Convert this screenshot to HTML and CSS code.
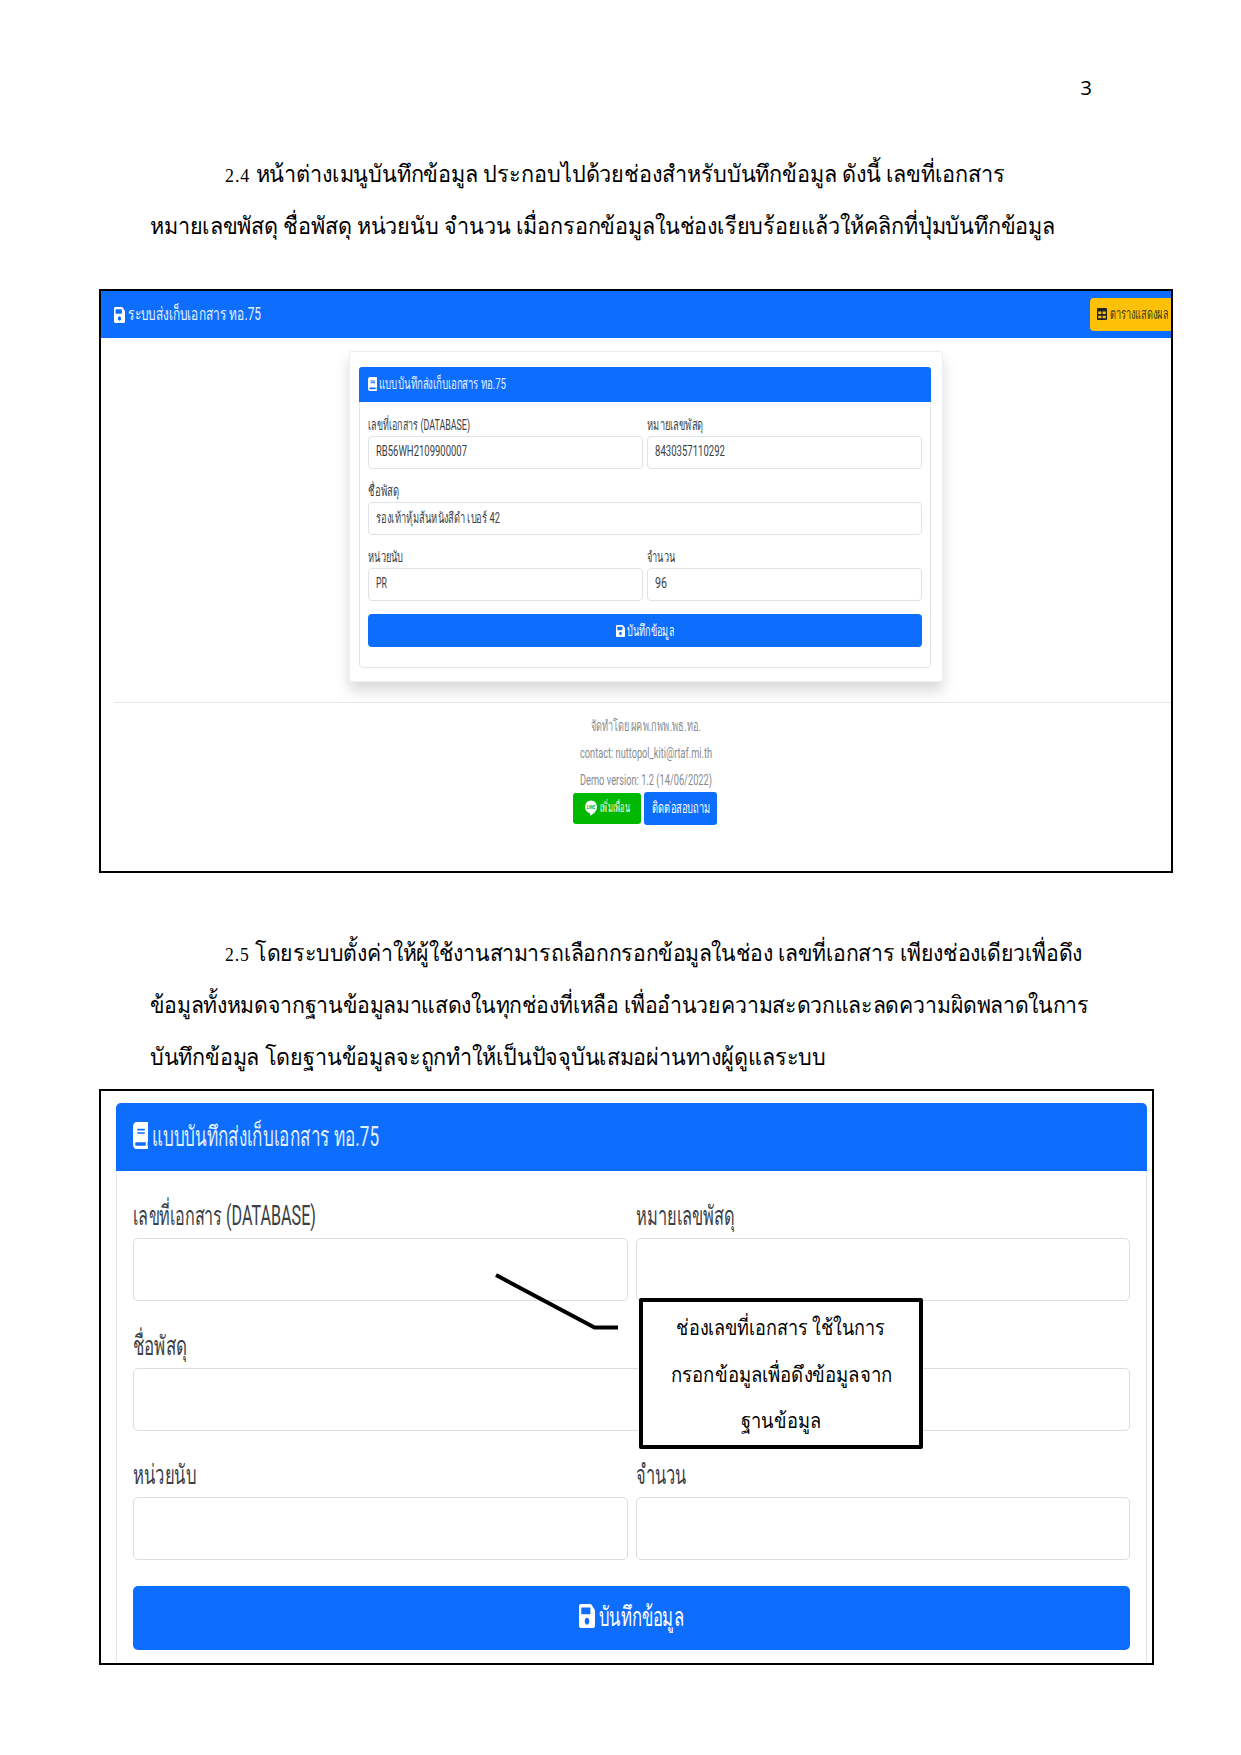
FILE: index.html
```
<!DOCTYPE html>
<html lang="th">
<head>
<meta charset="utf-8">
<title>คู่มือระบบส่งเก็บเอกสาร ทอ.75</title>
<link rel="stylesheet" href="styles.css">
</head>
<body>
<svg class="sprite" aria-hidden="true">
  <symbol id="save" viewBox="0 32 448 448" preserveAspectRatio="none"><path d="M433.941 129.941l-83.882-83.882A48 48 0 0 0 316.118 32H48C21.49 32 0 53.49 0 80v352c0 26.51 21.49 48 48 48h352c26.51 0 48-21.49 48-48V163.882a48 48 0 0 0-14.059-33.941zM224 416c-35.346 0-64-28.654-64-64 0-35.346 28.654-64 64-64s64 28.654 64 64c0 35.346-28.654 64-64 64zm96-304.52V212c0 6.627-5.373 12-12 12H76c-6.627 0-12-5.373-12-12V108c0-6.627 5.373-12 12-12h228.52c3.183 0 6.235 1.264 8.485 3.515l3.48 3.48A11.996 11.996 0 0 1 320 111.48z"/></symbol>
  <symbol id="book" viewBox="0 0 448 512" preserveAspectRatio="none"><path d="M448 360V24c0-13.3-10.7-24-24-24H96C43 0 0 43 0 96v320c0 53 43 96 96 96h328c13.3 0 24-10.7 24-24v-16c0-7.5-3.5-14.3-8.9-18.7-4.2-15.4-4.2-59.3 0-74.7 5.4-4.3 8.9-11.1 8.9-18.6zM128 134c0-3.3 2.7-6 6-6h212c3.3 0 6 2.7 6 6v20c0 3.3-2.7 6-6 6H134c-3.3 0-6-2.7-6-6v-20zm0 64c0-3.3 2.7-6 6-6h212c3.3 0 6 2.7 6 6v20c0 3.3-2.7 6-6 6H134c-3.3 0-6-2.7-6-6v-20zm253.4 250H96c-17.7 0-32-14.3-32-32 0-17.6 14.4-32 32-32h285.4c-1.9 17.1-1.9 46.9 0 64z"/></symbol>
  <symbol id="table" viewBox="0 32 512 448" preserveAspectRatio="none"><path d="M464 32H48C21.49 32 0 53.49 0 80v352c0 26.51 21.49 48 48 48h416c26.51 0 48-21.49 48-48V80c0-26.51-21.49-48-48-48zM224 416H64v-96h160v96zm0-160H64v-96h160v96zm224 160H288v-96h160v96zm0-160H288v-96h160v96z"/></symbol>
</svg>

<div class="page-number">3</div>

<p class="para">
  <span class="line first"><span class="fit" data-width="780"><span class="num">2.4</span> หน้าต่างเมนูบันทึกข้อมูล ประกอบไปด้วยช่องสำหรับบันทึกข้อมูล ดังนี้ เลขที่เอกสาร</span></span>
  <span class="line"><span class="fit" data-width="905">หมายเลขพัสดุ ชื่อพัสดุ หน่วยนับ จำนวน เมื่อกรอกข้อมูลในช่องเรียบร้อยแล้วให้คลิกที่ปุ่มบันทึกข้อมูล</span></span>
</p>

<section class="shot shot-full">
  <header class="topbar">
    <svg class="icon"><use href="#save"/></svg>
    <span class="fit" data-width="133">ระบบส่งเก็บเอกสาร ทอ.75</span>
    <a class="table-btn"><svg class="icon"><use href="#table"/></svg><span class="fit" data-width="58">ตารางแสดงผล</span></a>
  </header>
  <div class="panel">
    <div class="card">
      <div class="card-head"><svg class="icon"><use href="#book"/></svg><span class="fit" data-width="127">แบบบันทึกส่งเก็บเอกสาร ทอ.75</span></div>
      <form class="form">
        <div class="field"><label><span class="fit" data-width="102">เลขที่เอกสาร (DATABASE)</span></label><div class="input"><span class="fit" data-width="91">RB56WH2109900007</span></div></div>
        <div class="field"><label><span class="fit" data-width="56">หมายเลขพัสดุ</span></label><div class="input"><span class="fit" data-width="70">8430357110292</span></div></div>
        <div class="field wide"><label><span class="fit" data-width="31">ชื่อพัสดุ</span></label><div class="input"><span class="fit" data-width="124">รองเท้าหุ้มส้นหนังสีดำ เบอร์ 42</span></div></div>
        <div class="field"><label><span class="fit" data-width="35">หน่วยนับ</span></label><div class="input"><span class="fit" data-width="11">PR</span></div></div>
        <div class="field"><label><span class="fit" data-width="28">จำนวน</span></label><div class="input"><span class="fit" data-width="12">96</span></div></div>
        <div class="save-btn"><svg class="icon"><use href="#save"/></svg><span class="fit" data-width="47">บันทึกข้อมูล</span></div>
      </form>
    </div>
  </div>
  <footer class="foot">
    <div class="foot-line"><span class="fit" data-width="110">จัดทำโดย ผคพ.กพพ.พธ.ทอ.</span></div>
    <div class="foot-line"><span class="fit" data-width="132">contact: nuttopol_kiti@rtaf.mi.th</span></div>
    <div class="foot-line"><span class="fit" data-width="132">Demo version: 1.2 (14/06/2022)</span></div>
    <div class="foot-btns">
      <a class="line-btn">
        <svg class="bubble" viewBox="0 0 24 32" preserveAspectRatio="none"><path d="M12 1C5.400 1 0 6.600 0 14c0 6.500 4.200 11 9 12.200 1.600.6 1.200 2.300 1.300 5.300C17 28 24 22 24 14 24 6.600 18.600 1 12 1z"/><text x="3.500" y="17" textLength="17" lengthAdjust="spacingAndGlyphs">LINE</text></svg>
        <span class="fit" data-width="30">เพิ่มเพื่อน</span>
      </a>
      <a class="ask-btn"><span class="fit" data-width="58">ติดต่อสอบถาม</span></a>
    </div>
  </footer>
</section>

<p class="para para-second">
  <span class="line first"><span class="fit" data-width="857"><span class="num">2.5</span> โดยระบบตั้งค่าให้ผู้ใช้งานสามารถเลือกกรอกข้อมูลในช่อง เลขที่เอกสาร เพียงช่องเดียวเพื่อดึง</span></span>
  <span class="line"><span class="fit" data-width="939">ข้อมูลทั้งหมดจากฐานข้อมูลมาแสดงในทุกช่องที่เหลือ เพื่ออำนวยความสะดวกและลดความผิดพลาดในการ</span></span>
  <span class="line"><span class="fit" data-width="676">บันทึกข้อมูล โดยฐานข้อมูลจะถูกทำให้เป็นปัจจุบันเสมอผ่านทางผู้ดูแลระบบ</span></span>
</p>

<section class="shot shot-zoom">
  <div class="card">
    <div class="card-head"><svg class="icon"><use href="#book"/></svg><span class="fit" data-width="227">แบบบันทึกส่งเก็บเอกสาร ทอ.75</span></div>
    <form class="form">
      <div class="field"><label><span class="fit" data-width="183">เลขที่เอกสาร (DATABASE)</span></label><div class="input"></div></div>
      <div class="field"><label><span class="fit" data-width="99">หมายเลขพัสดุ</span></label><div class="input"></div></div>
      <div class="field wide"><label><span class="fit" data-width="54">ชื่อพัสดุ</span></label><div class="input"></div></div>
      <div class="field"><label><span class="fit" data-width="63">หน่วยนับ</span></label><div class="input"></div></div>
      <div class="field"><label><span class="fit" data-width="50">จำนวน</span></label><div class="input"></div></div>
      <div class="save-btn"><svg class="icon"><use href="#save"/></svg><span class="fit" data-width="85">บันทึกข้อมูล</span></div>
    </form>
  </div>
  <svg class="leader" viewBox="0 0 130 62"><path d="M4 5 102.500 57.500H126"/></svg>
  <div class="callout">
    <span class="fit" data-width="209">ช่องเลขที่เอกสาร ใช้ในการ</span>
    <span class="fit" data-width="222">กรอกข้อมูลเพื่อดึงข้อมูลจาก</span>
    <span class="fit" data-width="80">ฐานข้อมูล</span>
  </div>
</section>
<script src="fit.js"></script>
</body>
</html>
```
FILE: styles.css
```
* { box-sizing: border-box; }
body {
  margin: 0;
  width: 1241px;
  height: 1755px;
  background: #fff;
  color: #000;
  overflow: hidden;
}
.sprite { display: none; }
.fit {
  display: inline-block;
  flex: none;
  white-space: nowrap;
  transform-origin: left center;
}
.icon { flex: none; fill: currentColor; }

/* document text */
.page-number {
  height: 148px;
  padding: 72px 149px 0 0;
  text-align: right;
  font: 500 20.5px/30px "Open Sans", sans-serif;
}
.para {
  margin: 0 0 0 150px;
  font: 23.5px/52px "Liberation Serif", serif;
}
.para-second { margin-top: 54px; }
.line { display: block; height: 52px; }
.line.first { padding-left: 75px; }
.num { font-size: 19.5px; letter-spacing: 1px; }

/* framed captures */
.shot {
  position: relative;
  margin-left: 99px;
  border: 2px solid #000;
  overflow: hidden;
  font-family: Roboto, sans-serif;
  color: #3a4046;
}
.shot-full { width: 1074px; height: 584px; margin-top: 37px; }
.shot-zoom { width: 1055px; height: 576px; margin-top: 6px; padding: 12px 5px 0 15px; }

.topbar {
  display: flex;
  align-items: center;
  height: 47px;
  padding-left: 13px;
  background: #0d6efd;
  color: #e4effe;
  font-size: 18px;
  line-height: 24px;
}
.topbar > .icon { width: 11px; height: 16px; margin-right: 3px; color: #fff; }
.topbar > .fit { margin-top: -2px; }
.table-btn {
  display: flex;
  align-items: center;
  width: 81px;
  height: 33px;
  margin-left: auto;
  margin-top: -1px;
  padding-left: 7px;
  border-radius: 4px 0 0 4px;
  background: #ffc107;
  color: #3d3a1c;
  font-size: 15px;
}
.table-btn .icon { width: 10px; height: 12px; margin-right: 3px; color: #1f2226; }

.panel {
  width: 594px;
  height: 331px;
  margin: 13px 0 0 248px;
  padding: 15px 11px 0 9px;
  border: 1px solid #eceef0;
  border-radius: 3px;
  background: #fff;
  box-shadow: 0 9px 14px rgba(0, 0, 0, .15);
}
.card { border: 1px solid #e3e6e9; border-radius: 4px; background: #fff; }
.panel .card { height: 301px; }
.card-head {
  display: flex;
  align-items: center;
  background: #0d6efd;
  color: #e4effe;
}
.card-head .icon { color: #fff; }
.panel .card-head { height: 35px; margin: -1px -1px 0; padding: 0 0 2px 9px; font-size: 15.5px; line-height: 20px; border-radius: 3px 3px 0 0; }
.panel .card-head .icon { width: 9px; height: 14px; margin-right: 2px; }

.form { display: grid; grid-template-columns: 1fr 1fr; }
.panel .form { padding: 14px 8px 0; column-gap: 4px; }
.wide, .save-btn { grid-column: 1 / -1; }
label { display: block; }
.panel .field { height: 66px; font-size: 14.5px; }
.panel label { height: 20px; line-height: 19px; }
.input { display: flex; align-items: center; border: 1px solid #d9dee3; border-radius: 4px; }
.panel .input { height: 33px; padding: 0 0 2px 7px; border-color: #dfe3e7; }
.save-btn {
  display: flex;
  align-items: center;
  justify-content: center;
  border-radius: 4px;
  background: #0d6efd;
  color: #fff;
}
.panel .save-btn { height: 33px; font-size: 15px; }
.panel .save-btn .icon { width: 9px; height: 12px; margin-right: 2px; }

.foot {
  margin: 20px 0 0 13px;
  padding: 10px 0 0;
  border-top: 1px solid #e4e7ea;
  color: #858b91;
  font-size: 14.5px;
}
.foot-line { width: 1063px; height: 27px; line-height: 27px; text-align: center; }
.foot-btns {
  display: flex;
  align-items: center;
  justify-content: center;
  gap: 3px;
  width: 1062px;
  height: 33px;
  margin-top: -2px;
}
.foot-btns a { display: flex; align-items: center; justify-content: center; padding-bottom: 2px; color: #fff; border-radius: 3px; }
.foot-btns .line-btn { width: 68px; height: 31px; background: #00b900; font-size: 13px; }
.foot-btns .ask-btn { width: 73px; height: 33px; background: #0d6efd; font-size: 15px; }
.bubble { width: 12px; height: 16px; margin-right: 3px; fill: #fff; }
.bubble text { font: 700 9px Roboto, sans-serif; fill: #00b900; }

/* enlarged form */
.shot-zoom .card { height: 600px; border-radius: 6px; }
.shot-zoom .card-head { height: 68px; margin: -1px -1px 0; padding: 0 0 3px 17px; font-size: 27.5px; border-radius: 5px 5px 0 0; }
.shot-zoom .card-head .icon { width: 15px; height: 27px; margin-right: 4px; }
.shot-zoom .form { padding: 28px 16px 0; column-gap: 8px; }
.shot-zoom .field { height: 129.5px; font-size: 27px; }
.shot-zoom label { height: 39px; line-height: 35px; }
.shot-zoom .input { height: 63px; border-radius: 5px; }
.shot-zoom .save-btn { height: 64px; margin-top: -2px; padding-bottom: 3px; border-radius: 5px; font-size: 27px; }
.shot-zoom .save-btn .icon { width: 16px; height: 24px; margin-right: 4px; }

.leader {
  position: absolute;
  left: 391px;
  top: 179px;
  width: 130px;
  height: 62px;
  fill: none;
  stroke: #000;
  stroke-width: 4;
}
.callout {
  position: absolute;
  left: 538px;
  top: 207px;
  display: flex;
  flex-direction: column;
  align-items: center;
  width: 284px;
  height: 151px;
  padding-top: 3px;
  border: 4px solid #000;
  border-radius: 2px;
  background: #fff;
  color: #000;
  font: 21.5px/46.5px "Liberation Serif", serif;
}
```
FILE: fit.js
```
// Condense each label to its set width, keeping the layout box in step.
document.querySelectorAll('.fit').forEach(function (el) {
  var natural = el.getBoundingClientRect().width;
  var target = Number(el.dataset.width);
  el.style.transform = 'translateX(' + (el.parentNode.className === 'callout' ? (natural - target) / 2 : 0) + 'px) scaleX(' + target / natural + ')';
  if (el.parentNode.className !== 'callout') el.style.marginRight = (target - natural) + 'px';
});
```
